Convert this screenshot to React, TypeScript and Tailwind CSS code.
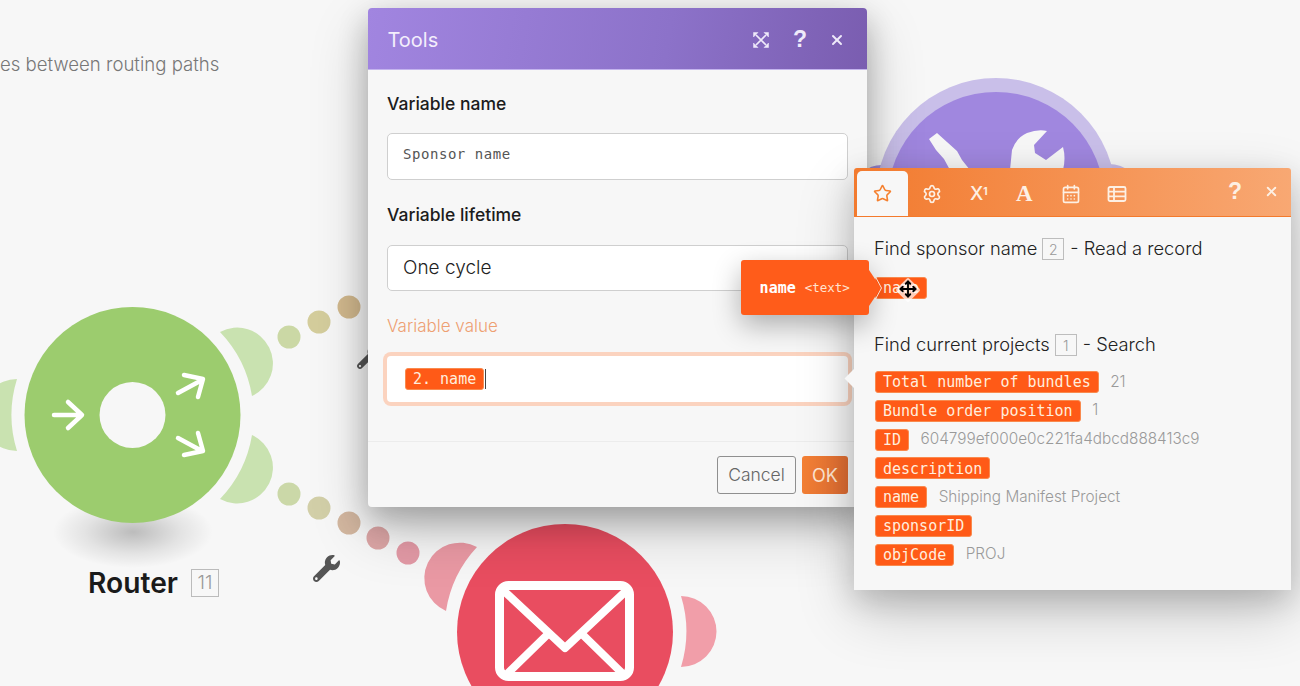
import { CalendarDays, Move, Settings, Star, X } from "lucide-react";
import { FaWrench } from "react-icons/fa";

const pills: { label: string; value?: string }[] = [
  { label: "Total number of bundles", value: "21" },
  { label: "Bundle order position", value: "1" },
  { label: "ID", value: "604799ef000e0c221fa4dbcd888413c9" },
  { label: "description" },
  { label: "name", value: "Shipping Manifest Project" },
  { label: "sponsorID" },
  { label: "objCode", value: "PROJ" },
];

const upperDots = [
  { cx: 289, cy: 337, fill: "#cbd8a5" },
  { cx: 319, cy: 322, fill: "#d4cd9c" },
  { cx: 349, cy: 307, fill: "#d2b98e" },
];

const lowerDots = [
  { cx: 289, cy: 494, fill: "#cbd8a8" },
  { cx: 319, cy: 508, fill: "#d2cfa8" },
  { cx: 349, cy: 523, fill: "#d3b7a0" },
  { cx: 378, cy: 538, fill: "#dca6a6" },
  { cx: 408, cy: 553, fill: "#e39aa6" },
];

function Pill({ children }: { children: string }) {
  return (
    <span className="inline-flex h-[22px] items-center whitespace-pre rounded-[3px] border border-[#f98a4e] bg-[#ff5a17] px-[7px] pt-[1px] font-['DejaVu_Sans_Mono',monospace] text-[15px] text-[#ffeede]">
      {children}
    </span>
  );
}

function ModuleBadge({ n }: { n: number }) {
  return (
    <span className="ml-[5px] mr-[6px] inline-flex h-[22px] w-[22px] items-center justify-center border border-[#bdbdbd] text-[14px] font-light text-[#999]">
      {n}
    </span>
  );
}

function ExpandIcon() {
  return (
    <svg className="h-[18px] w-[18px]" viewBox="0 0 18 18" fill="none" stroke="#efeafa" strokeWidth="1.7">
      <path d="M4 4 L14 14 M14 4 L4 14" />
      <path d="M1.5 1.5 H6 L1.5 6 Z M16.5 1.5 H12 L16.5 6 Z M1.5 16.5 H6 L1.5 12 Z M16.5 16.5 H12 L16.5 12 Z" fill="#efeafa" strokeWidth="0.5" />
    </svg>
  );
}

function TableIcon() {
  return (
    <svg className="ml-[26px] h-[20px] w-[20px]" viewBox="0 0 20 20" fill="none" stroke="currentColor" strokeWidth="1.8">
      <rect x="1.5" y="3" width="17" height="14" rx="1.5" />
      <path d="M1.5 7.6 H18.5 M1.5 12.4 H18.5 M7 3 V17" />
    </svg>
  );
}

function Diagram() {
  return (
    <svg className="absolute left-0 top-0" width="1300" height="686" viewBox="0 0 1300 686" fill="none">
      <defs>
        <radialGradient id="routerShadow">
          <stop offset="0%" stopColor="#000" stopOpacity="0.24" />
          <stop offset="60%" stopColor="#000" stopOpacity="0.08" />
          <stop offset="100%" stopColor="#000" stopOpacity="0" />
        </radialGradient>
      </defs>

      {upperDots.map((d) => (
        <circle key={d.cx} cx={d.cx} cy={d.cy} r="11.5" fill={d.fill} />
      ))}
      {lowerDots.map((d) => (
        <circle key={d.cx} cx={d.cx} cy={d.cy} r="11.5" fill={d.fill} />
      ))}

      {/* router */}
      <ellipse cx="133" cy="532" rx="80" ry="36" fill="url(#routerShadow)" />
      <path d="M17 379 A121 121 0 0 0 17 451 A36 36 0 1 1 17 379 Z" fill="#c9e2b0" />
      <path d="M220 332 A121 121 0 0 1 252 396 A35.8 35.8 0 1 0 220 332 Z" fill="#c9e2b0" />
      <path d="M220 499 A121 121 0 0 0 252 435 A35.8 35.8 0 1 1 220 499 Z" fill="#c9e2b0" />
      <circle cx="132.5" cy="415" r="108" fill="#9ccc6e" />
      <circle cx="132.5" cy="415" r="33" fill="#f7f7f7" />
      <g stroke="#fff" strokeWidth="4.5" strokeLinecap="round" strokeLinejoin="round">
        <path d="M54 415 H81 M68 402 L82 415 L68 428" />
        <path d="M178 393 L202 380 M184 375 L203 379 L198 397" />
        <path d="M178 438 L202 451 M184 455 L203 451 L198 433" />
      </g>

      {/* email */}
      <path d="M477 547 A121 121 0 0 0 446 611 A35.6 35.6 0 1 1 477 547 Z" fill="#ea99a4" />
      <path d="M681 596 A121 121 0 0 1 681 667 A35.5 35.5 0 0 0 681 596 Z" fill="#f19ea9" />
      <circle cx="565" cy="632" r="108" fill="#e94d60" />
      <g stroke="#fff" strokeWidth="8" strokeLinejoin="round" strokeLinecap="round">
        <rect x="499.5" y="585.5" width="130" height="91" rx="9" strokeWidth="9" />
        <path d="M504 591 L565 648 L626 591" />
        <path d="M506 675 L548 634 M624 675 L582 634" />
      </g>

      {/* tools */}
      <path d="M864 172 Q870 165 882 165 V172 Z" fill="#a48edb" />
      <path d="M1108 172 V164 Q1122 164 1130 172 Z" fill="#c6bbe8" />
      <circle cx="996" cy="198" r="120" fill="#c9bfe9" />
      <circle cx="996" cy="200.5" r="108.5" fill="#a087df" />
      <path d="M929 139 L937 133 L957 151 L962 160 L970 170 L950 170 L944 159 L936 150 Z" fill="#f7f7f7" />
      <path
        d="M1010 170 L1012 150 Q1016 138 1027 133 Q1038 129 1047 131 L1034 145 L1035 153 L1046 160 L1063 147 Q1066 158 1063 170 Z"
        fill="#f7f7f7"
      />
    </svg>
  );
}

function ToolsDialog() {
  return (
    <div className="absolute left-[367.5px] top-[8px] w-[499.5px] rounded-[4px] bg-[#f7f7f7] shadow-[0_12px_30px_rgba(0,0,0,0.24),0_22px_60px_rgba(0,0,0,0.2)]">
      <div className="flex h-[62px] items-center rounded-t-[4px] border-b border-[#c4b4ee] bg-[linear-gradient(100deg,#a185e0,#8c72c9_60%,#7a5db0)] pl-[20px] pr-[22px] pt-[2px]">
        <span className="flex-1 text-[20px] text-[#f3eefc]">Tools</span>
        <ExpandIcon />
        <span className="ml-[22px] w-[16px] text-center font-['Liberation_Sans',sans-serif] text-[23px] font-bold text-[#efeafa]">?</span>
        <X className="ml-[21px] h-[16px] w-[16px] text-[#efeafa]" strokeWidth={3} />
      </div>
      <div className="px-[19.5px] pt-[22px]">
        <div className="text-[17.5px] font-medium leading-[24px] text-[#1c1c1c]">Variable name</div>
        <div className="mt-[17px] flex h-[47px] items-center rounded-[5px] border border-[#cfcfcf] bg-white px-[15px] pb-[4px] font-['DejaVu_Sans_Mono',monospace] text-[14px] tracking-[0.55px] text-[#555]">
          Sponsor name
        </div>
        <div className="mt-[23px] text-[17.5px] font-medium leading-[24px] text-[#1c1c1c]">Variable lifetime</div>
        <div className="mt-[18px] flex h-[46px] items-center rounded-[5px] border border-[#cfcfcf] bg-white px-[15px] pt-[1px] text-[19px] font-light text-[#222]">
          One cycle
        </div>
        <div className="mt-[23px] text-[17px] font-light leading-[24px] text-[#ee9f72]">Variable value</div>
        <div className="mt-[18px] flex h-[46px] items-center rounded-[4px] bg-white pl-[18px] shadow-[0_0_0_4px_#fbd3bf]">
          <Pill>2. name</Pill>
          <span className="ml-px h-[20px] w-px bg-[#444]" />
        </div>
      </div>
      <div className="mt-[39px] flex justify-end gap-[6px] border-t border-[#ececec] pb-[13px] pl-[19px] pr-[19px] pt-[14px]">
        <div className="flex h-[38px] w-[79px] items-center justify-center rounded-[3px] border border-[#8f8f8f] pt-[1px] text-[17.5px] font-light text-[#666]">
          Cancel
        </div>
        <div className="flex h-[38px] w-[46px] items-center justify-center rounded-[3px] bg-[linear-gradient(100deg,#f58134,#e06d34)] text-[18px] text-[#ffe6d2]">
          OK
        </div>
      </div>
    </div>
  );
}

function MappingPanel() {
  return (
    <div className="absolute left-[854px] top-[168px] w-[437px] rounded-t-[3px] bg-[#f7f7f7] shadow-[0_10px_30px_rgba(0,0,0,0.16),0_22px_60px_rgba(0,0,0,0.2)]">
      <div className="flex h-[49px] items-end rounded-t-[3px] border-b border-[#f47a2c] bg-[linear-gradient(90deg,#f27a2e,#f8a873)] pl-[3px] text-[#fdf0e4]">
        <div className="flex h-[45px] w-[51px] items-center justify-center rounded-t-[5px] bg-[#f7f7f7]">
          <Star className="h-[19px] w-[19px] text-[#f5802f]" strokeWidth={2} />
        </div>
        <div className="flex h-[45px] flex-1 items-center">
          <Settings className="ml-[14px] h-[20px] w-[20px]" strokeWidth={2} />
          <span className="ml-[28px] w-[20px] text-[19px] font-medium leading-none">
            X<sup className="text-[10px] font-bold">1</sup>
          </span>
          <span className="ml-[26px] w-[18px] font-['Liberation_Serif',serif] text-[23px] font-bold leading-none">A</span>
          <CalendarDays className="ml-[27px] h-[20px] w-[20px]" strokeWidth={2} />
          <TableIcon />
          <span className="ml-auto mt-[-4px] font-['Liberation_Sans',sans-serif] text-[23px] font-bold">?</span>
          <X className="ml-[22px] mr-[12px] mt-[-4px] h-[15px] w-[15px]" strokeWidth={3} />
        </div>
      </div>
      <div className="pb-[24px] pl-[20px] pr-[20px] pt-[21px] text-[#222]">
        <div className="flex h-[22px] items-center text-[18.3px] font-light">
          Find sponsor name
          <ModuleBadge n={2} />
          - Read a record
        </div>
        <div className="ml-px mt-[17px] flex h-[22px]">
          <Pill>name</Pill>
        </div>
        <div className="mt-[35px] flex h-[22px] items-center text-[18.3px] font-light">
          Find current projects
          <ModuleBadge n={1} />
          - Search
        </div>
        <div className="ml-px mt-[15px] flex flex-col gap-[6.8px]">
          {pills.map((p) => (
            <div key={p.label} className="flex h-[22px] items-center gap-[11.5px]">
              <Pill>{p.label}</Pill>
              {p.value && <span className="text-[15.3px] font-light text-[#9a9a9a]">{p.value}</span>}
            </div>
          ))}
        </div>
      </div>
    </div>
  );
}

function NameTooltip() {
  return (
    <>
      <div className="absolute left-[740.5px] top-[260px] flex h-[55px] w-[128.5px] items-center justify-center gap-[9px] rounded-[3px] bg-[#ff5c1a] pt-[1px] font-['DejaVu_Sans_Mono',monospace] text-white shadow-[0_10px_28px_rgba(0,0,0,0.3)]">
        <span className="text-[15px] font-bold">name</span>
        <span className="text-[12.5px] text-[#ffe3d0]">&lt;text&gt;</span>
      </div>
      <svg className="absolute left-[866px] top-[268px]" width="20" height="40" viewBox="0 0 20 40">
        <path d="M3 2 L15 20 L3 38 Z" fill="#ff5c1a" />
        <path d="M9 8 L15.5 20 L9 32" fill="none" stroke="#ffe3d0" strokeWidth="1" />
      </svg>
    </>
  );
}

export default function App() {
  return (
    <div className="relative h-[686px] w-[1300px] overflow-hidden bg-[#f7f7f7] font-['Inter',sans-serif]">
      <div className="absolute left-0 top-[52px] whitespace-nowrap text-[18.6px] font-light leading-[24px] text-[#777]">
        es between routing paths
      </div>
      <Diagram />
      <FaWrench className="absolute left-[313px] top-[555px] h-[27px] w-[27px] text-[#555]" />
      <FaWrench className="absolute left-[357px] top-[345px] h-[24px] w-[24px] text-[#555]" />
      <div className="absolute left-[88px] top-[565px] flex h-[36px] items-center">
        <span className="text-[28.2px] font-semibold text-[#1a1a1a]">Router</span>
        <span className="ml-[13px] flex h-[28px] w-[28px] items-center justify-center border border-[#bbb] text-[19px] font-light text-[#999]">
          11
        </span>
      </div>
      <ToolsDialog />
      <MappingPanel />
      {/* panel callout pointing at the focused field */}
      <div className="absolute left-[848px] top-[370px] h-[17px] w-[17px] rotate-45 bg-[#f7f7f7]" />
      <NameTooltip />
      {/* drag cursor over the hovered pill */}
      <div className="absolute left-[899px] top-[281px] h-[18px] w-[18px] rotate-45 rounded-[2px] bg-white/70" />
      <Move className="absolute left-[899px] top-[280px] h-[18px] w-[18px] text-black" strokeWidth={2.5} />
    </div>
  );
}
